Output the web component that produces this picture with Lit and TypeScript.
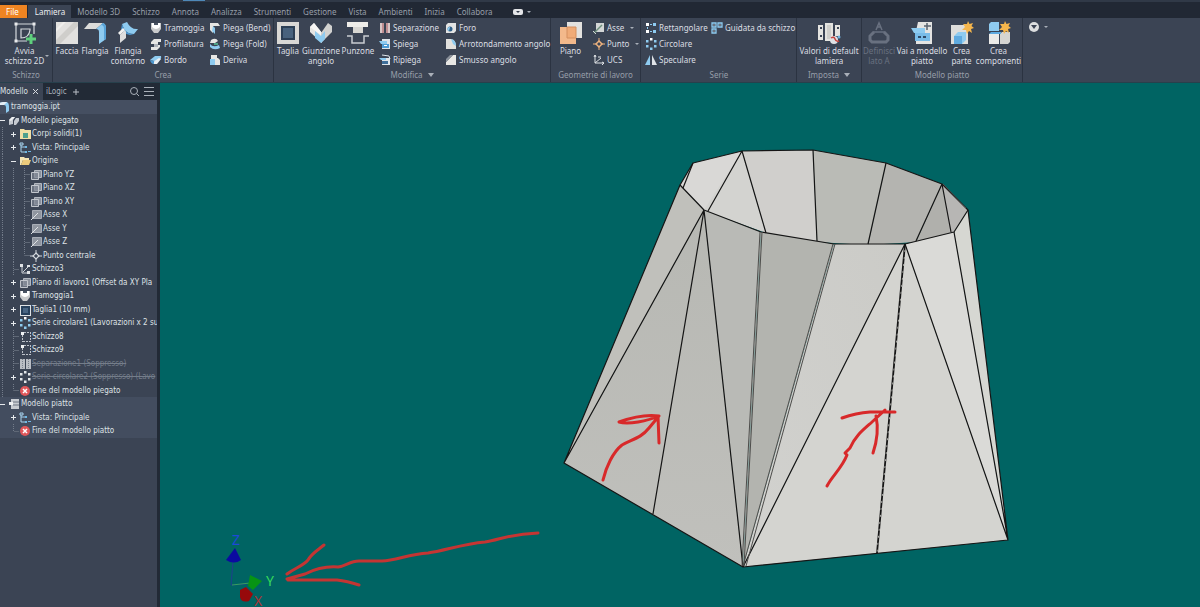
import { LitElement, html, svg, css, nothing } from "lit";
import { customElement, property, state } from "lit/decorators.js";
import { classMap } from "lit/directives/class-map.js";

const W = "#e6e6e4";
const B = "#8ecbf0";
const G = "#b9bdc4";

/* Large ribbon glyphs, 24 x 24 */
const big: Record<string, unknown> = {
  sketch: svg`<g fill="none" stroke="#d5d9de" stroke-width="1.2"><path d="M3 3H21V13M3 3V20H14M8 8H17V9Q16 17 8 17Z" /></g><g fill="#e8eaec"><path d="M1.500 1.500h3v3h-3zM19.500 1.500h3v3h-3zM1.500 18.500h3v3h-3z"/></g><path d="M18 13v10M13 18h10" stroke="#5fd07d" stroke-width="3"/>`,
  face: svg`<path d="M1 1H23V23H1Z" fill="#e2e1df"/><path d="M1 19L19 1H23V5L5 23H1Z" fill="#cfcecb"/><path d="M1 8L8 1H11L1 11Z" fill="#efeeec"/>`,
  flange: svg`<path d="M6 2H20L13 8H1Z" fill="#dcdcda"/><path d="M20 2Q23 3 23 7V18L16 23V11Q16 8 13 8Z" fill="${B}"/><path d="M20 2Q23 3 23 7V18L21 19V8Q21 4 18 4Z" fill="#58a3d8"/>`,
  contour: svg`<path d="M6 3L11 1Q15 9 22 8L18 13Q11 13 8 8Z" fill="${B}"/><path d="M6 3L8 8Q11 13 18 13L14 14Q8 13 5 9Z" fill="#4b96cf"/><path d="M9 9L4 14V22L10 17V11Z" fill="#dedede"/><path d="M4 14L2 12L7 7L9 9Z" fill="#f1f1f0"/>`,
  cut: svg`<path d="M1 1H23V23H1Z" fill="#d9d8d5"/><path d="M5 5H19V19H5Z" fill="#2c3f55"/><path d="M7 7H17V17H7Z" fill="#48627d"/>`,
  seam: svg`<path d="M1 6L5 2L13 12V22L1 11Z" fill="#e5e5e3"/><path d="M5 2L13 12L12 14L1 6Z" fill="#f6f6f5"/><path d="M23 5L19 2L12 12V22L23 11Z" fill="#d2d2d0"/><path d="M6 10L12 15L16 10V18L12 22L6 17Z" fill="${B}"/>`,
  punch: svg`<path d="M1 1H22V6H1Z" fill="#eeede9"/><path d="M7 6H17V12H7Z" fill="#d7d6d2"/><path d="M1 15H6V22H18V15H23" fill="none" stroke="#c9ccd1" stroke-width="1.500"/>`,
  plane: svg`<path d="M8 1H23V17H8Z" fill="#e3e2df"/><path d="M1 6H17V23H1Z" fill="#f3b98b"/><path d="M8 6H17V17H8Z" fill="#f0ab77" stroke="#d48f5e"/>`,
  defaults: svg`<path d="M8 2H16V20H8ZM1 4H6V19H1ZM18 4H23V15H18Z" fill="#e4e4e0"/><path d="M10 4H14V18H10Z" fill="#cfcfcb"/><path d="M3 6h2v2h-2zM3 14h2v2h-2zM20 6h2v2h-2z" fill="#3b4454"/><circle cx="17" cy="19" r="4" fill="#dfe1e4"/><path d="M14 17Q17 15 18 18T22 20" stroke="#c8463f" stroke-width="1.500" fill="none"/><circle cx="22" cy="16" r="1.500" fill="#6fb5e3"/>`,
  sideA: svg`<path d="M7 11L3 15V19L5 21H19L21 19V15L17 11" fill="none" stroke="#697180" stroke-width="3"/><path d="M6 11H18" stroke="#697180" stroke-width="1.500"/><path d="M9 9L12 2L15 9M10 6H14" fill="none" stroke="#697180" stroke-width="1.500"/>`,
  flat: svg`<path d="M8 1H22V23H6V10Z" fill="#e4e4e2"/><path d="M1 7H15V12H4Z" fill="${B}"/><path d="M5 12H20V20H5Z" fill="#79bce8"/><path d="M8 15h3v2h-3zM13 15h3v2h-3z" fill="#2f4a66"/><path d="M17 2v7M14 5h7" stroke="#5a636f" stroke-width="1.500"/>`,
  part: svg`<path d="M1 4H18V23H1Z" fill="#dededb"/><path d="M4 15L8 11H16V19L12 23H4Z" fill="${B}"/><path d="M4 15H12V23H4Z" fill="#5fabe0"/><path d="M18 0L19.500 3L23 2L21.500 5L24 7L21 8L22 12L19 10L17 13L16 9L12 9L15 6L13 3L17 3Z" fill="#f5b64c"/>`,
  comps: svg`<path d="M2 3L4 1H12V10H2Z" fill="${B}"/><path d="M2 13H12V23H2Z" fill="#ecebe8"/><path d="M13 13L15 11H23V21L21 23H13Z" fill="#d5d5d2"/><path d="M2 13L4 11H14V13Z" fill="#5fabe0"/><path d="M18 0L19.500 3L23 2L21.500 5L24 7L21 8L22 12L19 10L17 13L16 9L12 9L15 6L13 3L17 3Z" fill="#f5b64c"/>`,
};

/* Small ribbon and browser glyphs, 12 x 12 */
const small: Record<string, unknown> = {
  hopper: svg`<path d="M1 1H11V7L8 11H4L1 7Z" fill="#c9cacb"/><path d="M2 1H10V5Q6 9 2 5Z" fill="#fff"/><path d="M4 1H8V3H4Z" fill="#4b5564"/>`,
  profile: svg`<path d="M1 4L4 1H11V4H8V7H10V9L7 12H1V9H4V6H1Z" fill="${W}"/><path d="M4 6H8V9H4Z" fill="#aeb3ba"/>`,
  hem: svg`<path d="M0 6L5 2H11Q12 5 8 7H4Z" fill="${B}"/><path d="M3 8L9 4L11 5L7 10H3Z" fill="#e9eef3"/><path d="M0 6L4 7V10Q1 10 0 6Z" fill="#4c97cf"/>`,
  bend: svg`<path d="M1 1H9L11 4H4V11L1 8Z" fill="${W}"/><path d="M4 4L6 6V12L3 9Z" fill="${B}"/>`,
  fold: svg`<path d="M2 2Q7 -1 9 3L6 5H1Z" fill="${W}"/><path d="M1 6Q4 10 10 7L11 10Q5 13 1 9Z" fill="${B}"/><path d="M5 5H9V7H5Z" fill="#51a387"/>`,
  derive: svg`<path d="M2 1H8V5H2Z" fill="${W}"/><path d="M6 4H9L11 6V11H6Z" fill="${W}"/><path d="M1 5H6V11H1Z" fill="${B}"/>`,
  rip: svg`<path d="M1 1H5V11H1ZM7 1H11V11H7Z" fill="#d9c6c7"/><path d="M4 1V11M8 1V11" stroke="#a4545b" stroke-width="1"/>`,
  unfold: svg`<path d="M3 1H11V11H3Z" fill="#dfe5ea"/><path d="M0 3H8V6H2Z" fill="${B}"/><path d="M3 6H10V10H3Z" fill="#4d9cd5"/><path d="M5 7h3v1h-3z" fill="#fff"/>`,
  refold: svg`<path d="M3 4H11V11H3Z" fill="#dfe5ea"/><path d="M3 1L10 2L11 5" stroke="#dfe5ea" fill="none"/><path d="M0 4H7V6H2Z" fill="${B}"/><path d="M3 7H9V10H3Z" fill="#3f6f9a"/>`,
  hole: svg`<path d="M1 3L3 1H11V9L9 11H1Z" fill="#e2e3e3"/><circle cx="5" cy="7" r="2.500" fill="#2f5f88"/><path d="M5 5A2 2 0 0 0 4 9Z" fill="${B}"/>`,
  round: svg`<path d="M1 1H6Q11 2 11 8V11H1Z" fill="#e2e1de"/><path d="M6 1Q11 2 11 8L8 6Z" fill="${B}"/>`,
  chamfer: svg`<path d="M1 8L8 1H11V11H1Z" fill="#e8e7e4"/><path d="M1 8L8 1L5 1L1 5Z" fill="#8a9099"/>`,
  axis: svg`<path d="M3 1H11V10H3Z" fill="#d3d6d6"/><path d="M1 11L9 3" stroke="#6d8f7c" stroke-width="1.500"/><path d="M0 9L3 12" stroke="#d3d6d6"/>`,
  point: svg`<path d="M6 3L9 6L6 9L3 6Z" fill="none" stroke="#eeb27e" stroke-width="1.500"/><path d="M6 0V3M6 9V12M0 6H3M9 6H12" stroke="#eeb27e"/>`,
  ucs: svg`<path d="M2 1V9H11M2 9L8 4M1 3L2 1L3 3M9 8L11 9L9 11" fill="none" stroke="#dfe2e5"/><path d="M5 3H8" stroke="#dfe2e5"/>`,
  rect: svg`<path d="M1 1h3v3h-3zM1 8h3v3h-3z" fill="#fff"/><path d="M8 1h3v3h-3zM8 8h3v3h-3zM5 2h2v1h-2zM2 5h1v2h-1zM5 9h2v1h-2z" fill="${B}"/>`,
  circ: svg`<path d="M9 2h2.500v2.500h-2.500zM9 7h2.500v2.500h-2.500zM5 9.500h2.500v2.500h-2.500zM1 7h2.500v2.500h-2.500zM1 2h2.500v2.500h-2.500z" fill="${B}"/><path d="M5 0h2.500v2.500h-2.500z" fill="#fff"/>`,
  mirror: svg`<path d="M5 1V11H0Z" fill="${B}"/><path d="M7 1V11H12Z" fill="#dfe3e7"/>`,
  guided: svg`<g fill="none" stroke="${B}" stroke-width="1.300"><path d="M1 1H5V5H1ZM7 1H11V5H7ZM1 7H5V11H1Z"/></g><path d="M2.500 3h1M8.500 3h1M2.500 9h1" stroke="#fff"/>`,
  doc: svg`<path d="M1 2L5 1H9Q11 2 11 5V10L8 12V6Q8 4 6 4H0Z" fill="${B}"/><path d="M1 2L5 1H9L6 4H0Z" fill="#e5edf3"/>`,
  folded: svg`<path d="M1 5L4 2H7L5 5V9L1 10ZM6 6L8 3H11V6L8 10H6Z" fill="#c5cad1"/><path d="M4 2L7 2L3 6L1 5Z" fill="#eef0f2"/>`,
  bodies: svg`<path d="M1 1H5L6 2H12V11H1Z" fill="#f1dfa5"/><path d="M4 5H9V10H4Z" fill="#4ea08d"/>`,
  view: svg`<path d="M1 1H4V3H1ZM2 3V10H6M2 5H6" fill="none" stroke="#a9d4ee"/><path d="M6 4h2v2h-2zM6 9h2v2h-2zM9 9h3v1h-3z" fill="#6fb9e6"/>`,
  folder: svg`<path d="M1 2H5L6 3H10V5H4L2 10H1Z" fill="#f6e6b5"/><path d="M4 5H12L10 10H2Z" fill="#eccb7c"/>`,
  wplane: svg`<path d="M4.500 1.500H11.500V8.500H4.500Z" fill="#8b929d" stroke="#b4b9c1"/><path d="M1.500 3.500H8.500V10.500H1.500Z" fill="#7d8591" fill-opacity="0.700" stroke="#c2c6cd"/>`,
  waxis: svg`<path d="M2.500 1.500H11.500V9.500H2.500Z" fill="#9096a0" stroke="#a8adb6"/><path d="M1 11L8 4" stroke="#dfe2e5"/>`,
  wpoint: svg`<path d="M6 3L9 6L6 9L3 6Z" fill="none" stroke="#d5d9de" stroke-width="1.200"/><path d="M6 0V3M6 9V12M0 6H3M9 6H12" stroke="#d5d9de"/>`,
  sk: svg`<path d="M3.500 4V11M4 10.500H11M11.500 1V11M5 1.500H11" fill="none" stroke="#bcc1c9" stroke-dasharray="2 1"/><path d="M2 1h3v3h-3z" fill="#eef0f2"/>`,
  sk3: svg`<path d="M3 2V10H10M4 9L10 3" fill="none" stroke="#cdd1d7"/><path d="M1 1h3v3h-3zM8 2h3v2h-3zM8 8h3v3h-3z" fill="#dfe2e5"/>`,
  tcut: svg`<path d="M1 1H12V12H1Z" fill="#dfe2e5"/><path d="M2 2H11V11H2Z" fill="#27405c"/><path d="M4 4H9V9H4Z" fill="#486482"/>`,
  tsplit: svg`<path d="M1 1H6V11H1ZM7 1H12V11H7Z" fill="${G}"/><path d="M3.500 1V11M9.500 1V11" stroke="#79818c" stroke-dasharray="1 1"/>`,
  tcirc: svg`<path d="M5 0h2.500v2.500h-2.500zM9 2h2.500v2.500h-2.500zM9 7h2.500v2.500h-2.500zM5 9.500h2.500v2.500h-2.500zM1 7h2.500v2.500h-2.500zM1 2h2.500v2.500h-2.500z" fill="#e3e6e9"/>`,
  end: svg`<circle cx="6" cy="6" r="5" fill="#e0575a"/><path d="M4 4L8 8M8 4L4 8" stroke="#fff" stroke-width="1.500"/>`,
  flatm: svg`<path d="M3 1H11V11H3Z" fill="#c7cbd1"/><path d="M1 4H5V7H1Z" fill="#eef0f2"/><path d="M5 4H11M5 7H11" stroke="#6d7582"/>`,
};

interface Small { label: string; icon: string; menu?: boolean }
interface Item { kind: "big" | "col"; label?: string; icon?: string; menu?: boolean; off?: boolean; items?: Small[] }
interface Group { id: string; title: string; menu?: boolean; items: Item[] }

const s = (label: string, icon: string, menu = false): Small => ({ label, icon, menu });
const b = (label: string, icon: string, extra: Partial<Item> = {}): Item => ({ kind: "big", label, icon, ...extra });
const c = (...items: Small[]): Item => ({ kind: "col", items });

const GROUPS: Group[] = [
  { id: "schizzo", title: "Schizzo", items: [b("Avvia\nschizzo 2D", "sketch", { menu: true })] },
  { id: "crea", title: "Crea", items: [
    b("Faccia", "face"), b("Flangia", "flange"), b("Flangia\ncontorno", "contour"),
    c(s("Tramoggia", "hopper"), s("Profilatura", "profile"), s("Bordo", "hem")),
    c(s("Piega (Bend)", "bend"), s("Piega (Fold)", "fold"), s("Deriva", "derive")) ] },
  { id: "modifica", title: "Modifica", menu: true, items: [
    b("Taglia", "cut"), b("Giunzione\nangolo", "seam"), b("Punzone", "punch"),
    c(s("Separazione", "rip"), s("Spiega", "unfold"), s("Ripiega", "refold")),
    c(s("Foro", "hole"), s("Arrotondamento angolo", "round"), s("Smusso angolo", "chamfer")) ] },
  { id: "geometrie", title: "Geometrie di lavoro", items: [
    b("Piano\n", "plane", { menu: true }),
    c(s("Asse", "axis", true), s("Punto", "point", true), s("UCS", "ucs")) ] },
  { id: "serie", title: "Serie", items: [
    c(s("Rettangolare", "rect"), s("Circolare", "circ"), s("Speculare", "mirror")),
    c(s("Guidata da schizzo", "guided")) ] },
  { id: "imposta", title: "Imposta", menu: true, items: [b("Valori di default\nlamiera", "defaults")] },
  { id: "piatto", title: "Modello piatto", items: [
    b("Definisci\nlato A", "sideA", { off: true }), b("Vai a modello\npiatto", "flat"),
    b("Crea\nparte", "part"), b("Crea\ncomponenti", "comps") ] },
];

@customElement("cad-icon")
class CadIcon extends LitElement {
  @property() name = "";
  @property({ type: Boolean }) large = false;
  static styles = css`
    :host { display: block; flex: none; width: 12px; height: 12px; }
    :host([large]) { width: 24px; height: 24px; }
    svg { display: block; width: 100%; height: 100%; }
  `;
  render() {
    return this.large
      ? html`<svg viewBox="0 0 24 24" aria-hidden="true">${big[this.name]}</svg>`
      : html`<svg viewBox="0 0 12 12" aria-hidden="true">${small[this.name]}</svg>`;
  }
}

@customElement("cad-ribbon")
class CadRibbon extends LitElement {
  @state() active = "Lamiera";
  static styles = css`
    :host { display: block; font: 8px/10px "Noto Sans", sans-serif; color: #dcdfe3; background: #212834; }
    button { font: inherit; color: inherit; background: none; border: 0; padding: 0; margin: 0; white-space: nowrap; }
    .strip { display: flex; height: 2px; background: #303947; margin-bottom: 3px; }
    .progress { width: 22px; height: 1px; margin-left: 183px; background: #4e88b8; }
    .tabs { display: flex; height: 13px; align-items: stretch; }
    .tab { padding: 0 6px; color: #979ea9; }
    .tab.file { background: #ee8422; color: #fff; padding: 0 8px 0 6px; margin-right: 1px; }
    .tab.on { background: #3b4454; color: #eceef0; padding-left: 7px; }
    .expand { display: flex; align-items: center; gap: 4px; margin-left: 14px; }
    .pill { width: 10px; height: 6px; border-radius: 2px; background: #e3e5e8; display: grid; place-items: center; }
    .pill .arrow { border-top-color: #303947; border-width: 2px 2px 0; }
    .arrow { width: 0; height: 0; border: solid transparent; border-width: 2px 2px 0; border-top-color: #aab0b9; }
    .bar { display: flex; background: #3b4454; border-bottom: 1px solid #27404c; }
    .group { display: flex; flex-direction: column; flex: none; box-sizing: border-box; border-right: 1px solid #2b3341; padding-top: 2px; }
    .body { display: grid; height: 48px; }
    .schizzo { width: 53px; }
    .schizzo .body { grid-template-columns: 49px; }
    .crea { width: 221px; }
    .crea .body { grid-template-columns: 28px 28px 38px 59px 1fr; }
    .modifica { width: 277px; }
    .modifica .body { grid-template-columns: 28px 38px 36px 66px 1fr; }
    .geometrie { width: 90px; }
    .geometrie .body { grid-template-columns: 39px 1fr; }
    .serie { width: 156px; padding-left: 1px; }
    .serie .body { grid-template-columns: 66px 1fr; }
    .imposta { width: 65px; }
    .piatto { width: 161px; }
    .piatto .body { grid-template-columns: 34px 52px 27px 1fr; }
    .big { display: flex; flex-direction: column; align-items: center; gap: 1px; padding-top: 1px; min-width: 0; }
    .big[disabled] { color: #697180; }
    .lines { display: flex; align-items: center; white-space: pre; text-align: center; }
    .drop { display: flex; flex-direction: column; align-items: center; }
    .beside { margin: 0 -5px 0 1px; }
    .col { display: flex; flex-direction: column; padding-left: 3px; }
    .small { display: flex; align-items: center; gap: 2px; height: 16px; text-align: left; }
    .small .arrow { margin-left: 4px; }
    .title { display: flex; justify-content: center; align-items: center; gap: 5px; height: 14px; color: #979ea9; }
    .title .arrow { border-width: 4px 3px 0; }
    .help { display: flex; align-items: center; gap: 5px; height: 16px; padding: 2px 0 0 6px; }
    .disc { width: 10px; height: 10px; border-radius: 50%; background: #dcdedf; display: grid; place-items: center; }
    .disc .arrow { border-width: 4px 3px 0; border-top-color: #3b4454; }
  `;
  private item(i: Item) {
    if (i.kind === "col")
      return html`<div class="col">${i.items!.map(x => html`<button class="small"><cad-icon name=${x.icon}></cad-icon><span>${x.label}</span>${x.menu ? html`<i class="arrow"></i>` : nothing}</button>`)}</div>`;
    const under = i.label!.endsWith("\n");
    return html`<button class="big" ?disabled=${i.off}>
      <cad-icon large name=${i.icon!}></cad-icon>
      ${under
        ? html`<span class="drop"><span>${i.label!.trim()}</span><i class="arrow"></i></span>`
        : html`<span class="lines"><span>${i.label}</span>${i.menu ? html`<i class="arrow beside"></i>` : nothing}</span>`}
    </button>`;
  }
  render() {
    const tabs = ["Lamiera", "Modello 3D", "Schizzo", "Annota", "Analizza", "Strumenti", "Gestione", "Vista", "Ambienti", "Inizia", "Collabora"];
    return html`
      <div class="strip"><div class="progress"></div></div>
      <nav class="tabs">
        <button class="tab file">File</button>
        ${tabs.map(t => html`<button class=${classMap({ tab: true, on: t === this.active })} @click=${() => (this.active = t)}>${t}</button>`)}
        <button class="expand" aria-label="Riduci barra"><span class="pill"><i class="arrow"></i></span><i class="arrow"></i></button>
      </nav>
      <div class="bar">
        ${GROUPS.map(g => html`<section class="group ${g.id}">
          <div class="body">${g.items.map(i => this.item(i))}</div>
          <div class="title"><span>${g.title}</span>${g.menu ? html`<i class="arrow"></i>` : nothing}</div>
        </section>`)}
        <button class="help" aria-label="Opzioni"><span class="disc"><i class="arrow"></i></span><i class="arrow"></i></button>
      </div>`;
  }
}

interface Row { d: number; icon: string; text: string; t?: "+" | "-"; off?: boolean; flat?: boolean; last?: boolean }
const ROWS: Row[] = [
  { d: -1, icon: "doc", text: "tramoggia.ipt" },
  { d: 0, icon: "folded", text: "Modello piegato", t: "-" },
  { d: 1, icon: "bodies", text: "Corpi solidi(1)", t: "+" },
  { d: 1, icon: "view", text: "Vista: Principale", t: "+" },
  { d: 1, icon: "folder", text: "Origine", t: "-" },
  { d: 2, icon: "wplane", text: "Piano YZ" },
  { d: 2, icon: "wplane", text: "Piano XZ" },
  { d: 2, icon: "wplane", text: "Piano XY" },
  { d: 2, icon: "waxis", text: "Asse X" },
  { d: 2, icon: "waxis", text: "Asse Y" },
  { d: 2, icon: "waxis", text: "Asse Z" },
  { d: 2, icon: "wpoint", text: "Punto centrale", last: true },
  { d: 1, icon: "sk3", text: "Schizzo3" },
  { d: 1, icon: "wplane", text: "Piano di lavoro1 (Offset da XY Pla", t: "+" },
  { d: 1, icon: "hopper", text: "Tramoggia1", t: "+" },
  { d: 1, icon: "tcut", text: "Taglia1 (10 mm)", t: "+" },
  { d: 1, icon: "circ", text: "Serie circolare1 (Lavorazioni x 2 su", t: "+" },
  { d: 1, icon: "sk", text: "Schizzo8" },
  { d: 1, icon: "sk", text: "Schizzo9" },
  { d: 1, icon: "tsplit", text: "Separazione1 (Soppresso)", off: true },
  { d: 1, icon: "tcirc", text: "Serie circolare2 (Soppresso) (Lavo", t: "+", off: true },
  { d: 1, icon: "end", text: "Fine del modello piegato", last: true },
  { d: 0, icon: "flatm", text: "Modello piatto", t: "-", flat: true },
  { d: 1, icon: "view", text: "Vista: Principale", t: "+", flat: true },
  { d: 1, icon: "end", text: "Fine del modello piatto", flat: true, last: true },
];

@customElement("model-browser")
class ModelBrowser extends LitElement {
  static styles = css`
    :host { display: block; box-sizing: border-box; background: #3b4454; border-right: 3px solid #222a36; font: 8px/10px "DejaVu Sans Condensed", "DejaVu Sans", sans-serif; color: #dfe2e6; overflow: hidden; }
    button { font: inherit; color: inherit; background: none; border: 0; padding: 0; margin: 0; }
    svg { display: block; }
    .head { display: flex; align-items: center; height: 17px; background: #222a36; }
    .tab { display: flex; align-items: center; justify-content: space-between; height: 17px; }
    .on { width: 43px; background: #3b4454; box-sizing: border-box; padding-right: 4px; }
    .tab.other { padding: 0 5px 0 3px; color: #aab0b9; }
    .tools { display: flex; gap: 4px; margin-left: auto; padding-right: 2px; color: #aab0b9; }
    .tree { list-style: none; margin: 0 0 0 -3px; padding: 0; }
    .row { display: flex; align-items: center; height: 14px; white-space: nowrap; }
    .row:nth-child(even) { height: 13px; }
    .root { background: #454f61; padding-left: 1px; }
    .flat { background: #434d5f; }
    .cell { flex: none; width: 11px; align-self: stretch; display: grid; place-items: center; }
    .guide { background: repeating-linear-gradient(#737c8a 0 1px, transparent 1px 2px) 5px 0 / 1px 100% no-repeat; }
    .end { background-size: 1px 50%; }
    .toggle { position: relative; width: 5px; height: 1px; background: #e6e9ec; }
    .plus::after { content: ""; position: absolute; left: 2px; top: -2px; width: 1px; height: 5px; background: #e6e9ec; }
    .dash { width: 5px; height: 1px; margin-left: 6px; background: #5f6876; }
    .label { margin-left: 1px; }
    .off { color: #747d8a; text-decoration: line-through; }
  `;
  private row(r: Row) {
    const guides = [];
    for (let i = 0; i < r.d; i++) guides.push(html`<span class=${classMap({ cell: true, guide: !(r.flat && i === 0) })}></span>`);
    return html`<li class=${classMap({ row: true, root: r.d < 0, flat: !!r.flat })}>
      ${guides}
      ${r.d < 0 ? nothing : html`<span class=${classMap({ cell: true, guide: !r.t && r.d > 0, end: !!r.last })}>
        ${r.t ? html`<i class=${classMap({ toggle: true, plus: r.t === "+" })}></i>` : html`<i class="dash"></i>`}</span>`}
      <cad-icon name=${r.icon}></cad-icon><span class=${classMap({ label: true, off: !!r.off })}>${r.text}</span></li>`;
  }
  render() {
    return html`
      <div class="head">
        <button class="tab on"><span>Modello</span><svg width="7" height="7" viewBox="0 0 7 7"><path d="M1 1L6 6M6 1L1 6" stroke="#d5d9de" /></svg></button>
        <button class="tab other">iLogic</button>
        <button aria-label="Aggiungi"><svg width="8" height="8" viewBox="0 0 8 8"><path d="M4 1V7M1 4H7" stroke="#b9bec6" /></svg></button>
        <div class="tools">
          <button aria-label="Cerca"><svg width="11" height="11" viewBox="0 0 11 11" fill="none" stroke="currentColor"><circle cx="5" cy="5" r="3.500"/><path d="M7.500 7.500L10 10"/></svg></button>
          <button aria-label="Menu"><svg width="11" height="11" viewBox="0 0 11 11"><path d="M0 1.500H10M0 5.500H10M0 9.500H10" stroke="currentColor" /></svg></button>
        </div>
      </div>
      <ul class="tree">${ROWS.map(r => this.row(r))}</ul>`;
  }
}

const FACES: [string, string][] = [
  ["#d9d8d6", "680,185 693,163 742,151 708,211 704,210"],
  ["#d3d3d0", "742,151 704,210 708,212 766,233"],
  ["#d0cfcc", "742,151 813,150 817,242 766,233"],
  ["#babbb6", "813,150 886,163 868,245 817,242"],
  ["#b4b4b0", "886,163 942,184 916,242 868,245"],
  ["#b0b0ac", "942,184 951,233 916,242"],
  ["#b7b6b4", "942,184 968,210 954,232 950,233"],
  ["#c0c0bb", "680,185 704,210 564,463"],
  ["url(#left)", "704,210 564,463 743,567"],
  ["#b9bab6", "704,210 761,232 743,567"],
  ["#b3b4af", "761,232 834,244 743,567"],
  ["url(#mid)", "834,244 905,244 743,567"],
  ["#d4d4d0", "905,244 743,567 1008,540"],
  ["#dadad7", "905,244 954,232 1008,540"],
  ["#d6d7d2", "954,232 968,210 1008,540"],
];

@customElement("model-view")
class ModelView extends LitElement {
  static styles = css`
    :host { display: block; background: #006463; overflow: hidden; }
    .scene { display: block; width: 100%; height: 100%; }
    .edge { fill: none; stroke: #151515; stroke-width: 1.2; stroke-linejoin: round; }
    .fine { stroke: #4c4c4a; stroke-width: 1; }
    .thick { stroke-width: 1.800; }
    .gaps { stroke: #a8a8a4; stroke-width: 1; stroke-dasharray: 2 5; }
    .ink { fill: none; stroke: #d8292a; stroke-width: 3; stroke-linecap: round; stroke-linejoin: round; }
    .far { stroke: #c43533; }
    .axis { font: 14px "Noto Sans", sans-serif; }
  `;
  render() {
    return html`<svg class="scene" viewBox="160 83 1040 524" role="img" aria-label="Tramoggia">
      <defs>
        <linearGradient id="left" x1="0" y1="0" x2="0" y2="1"><stop offset="0" stop-color="#b7b8b3"/><stop offset="1" stop-color="#c0c0bc"/></linearGradient>
        <linearGradient id="mid" x1="1" y1="0" x2="0" y2="1"><stop offset="0" stop-color="#cbcbc7"/><stop offset="1" stop-color="#d2d2cf"/></linearGradient>
      </defs>
      ${FACES.map(([fill, pts]) => svg`<polygon points=${pts} fill=${fill} />`)}
      <path class="edge" d="M680 185L693 163L742 151L813 150L886 163L942 184L968 210L954 232L905 244H834L761 232L704 210Z"/>
      <path class="edge" d="M742 151L708 211M742 151L766 233M813 150L817 241M886 163L868 244M942 184L916 241M942 184L951 232M693 163L683 188"/>
      <path class="edge" d="M680 185L564 463L743 567L1008 540L968 210M704 210L564 463M704 210L653 514M704 210L743 567M905 244L743 567M905 244L1008 540M954 232L1008 540"/>
      <path class="edge fine" d="M760 232L742 566M762 232L744 566M833 244L743 566M835 244L746 566M943 184L966 208"/>
      <path class="edge thick" d="M905 244L877 553"/>
      <path class="edge gaps" d="M905 250L877 553"/>
      <path class="ink" d="M603 480C606 467 613 452 622 445C633 439 641 438 649 428L659 416M659 416C645 414 630 418 619 422C628 425 648 421 658 416L659 443"/>
      <path class="ink" d="M827 486C832 476 842 468 847 455L845 453L850 448C855 436 863 430 872 422L885 410M842 418Q856 413 870 412H895M876 416C879 430 877 441 873 453"/>
      <path class="ink far" d="M538 533C508 534 500 540 485 542C462 544 444 551 428 553C408 554 396 561 382 561H359C350 561 346 566 338 567C325 566 315 569 305 574L287 579M287 574C295 568 303 566 308 560C312 553 318 550 324 545M288 580L337 580Q347 581 359 585"/>
      <path d="M233 562L231 585L246 584" fill="none" stroke="#1f3f8f"/>
      <path d="M232 585L250 583" stroke="#37a05a"/>
      <path d="M235 548L241 560Q234 565 226 560Z" fill="#0b0ba0"/>
      <path d="M250 575L262 581L253 590L248 586Z" fill="#079414"/>
      <path d="M240 590L246 587L253 594L249 601Q241 603 240 597Z" fill="#97090b"/>
      <text class="axis" x="232" y="545" fill="#1f48d8">Z</text>
      <text class="axis" x="266" y="586" fill="#35d95a">Y</text>
      <text class="axis" x="254" y="606" fill="#a83537">X</text>
    </svg>`;
  }
}

@customElement("app-root")
class AppRoot extends LitElement {
  static styles = css`
    :host { display: flex; flex-direction: column; height: 100vh; overflow: hidden; background: #222a36; }
    .main { display: grid; grid-template-columns: 160px minmax(0, 1fr); flex: 1; min-height: 0; }
  `;
  render() {
    return html`<cad-ribbon></cad-ribbon>
      <div class="main"><model-browser></model-browser><model-view></model-view></div>`;
  }
}
